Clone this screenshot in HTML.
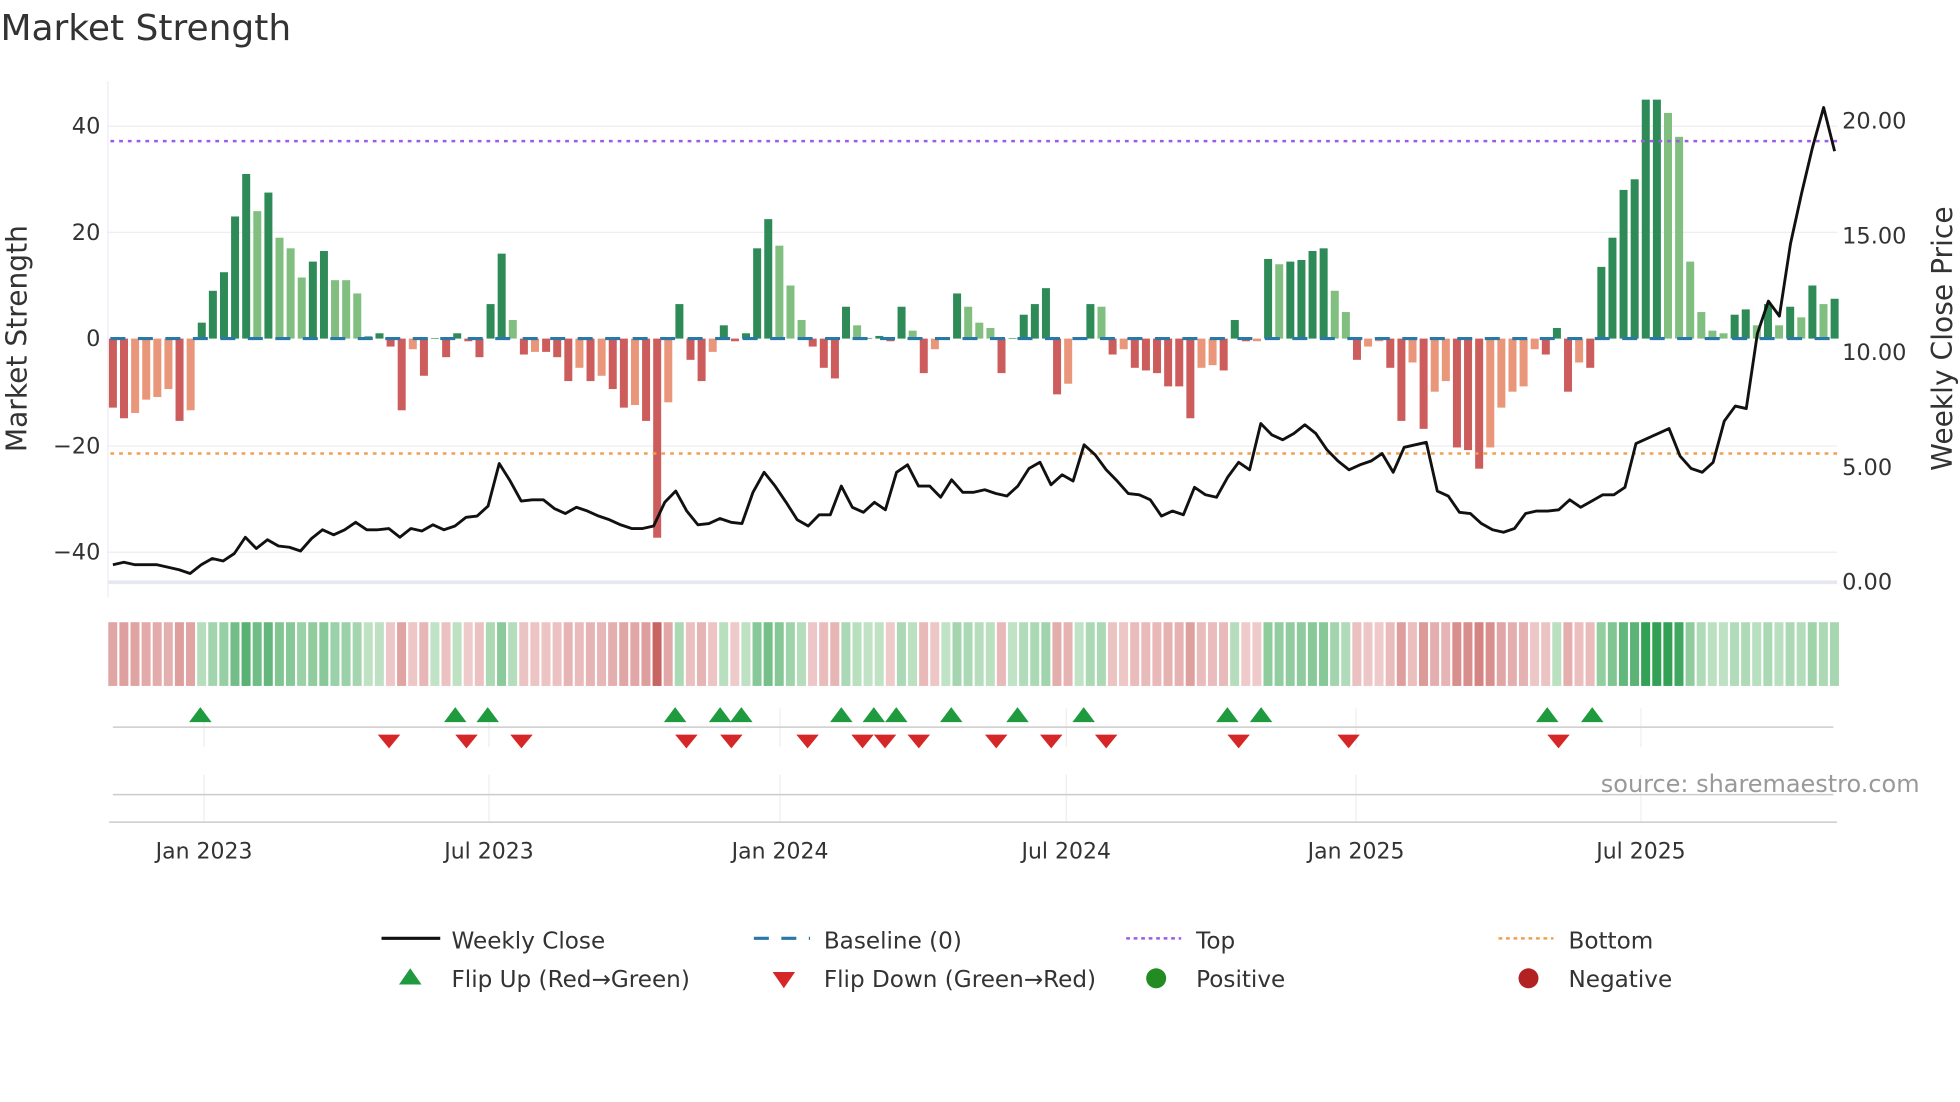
<!DOCTYPE html>
<html><head><meta charset="utf-8"><style>
html,body{margin:0;padding:0;background:#fff;width:1960px;height:1102px;overflow:hidden}
svg{display:block}
text{font-family:"DejaVu Sans","Liberation Sans",sans-serif}
</style></head><body>
<svg id="s" width="1960" height="1102" viewBox="0 0 1568 882" xmlns="http://www.w3.org/2000/svg">
<rect width="1568" height="882" fill="#fff"/>
<text x="0" y="32" font-size="28.8" fill="#333">Market Strength</text>
<g stroke="#eceef4" stroke-width="1">
<line x1="86" y1="101" x2="1470" y2="101"/><line x1="86" y1="186" x2="1470" y2="186"/>
<line x1="86" y1="357" x2="1470" y2="357"/><line x1="86" y1="442" x2="1470" y2="442"/>
</g>
<line x1="86" y1="466" x2="1470" y2="466" stroke="#e6e8f0" stroke-width="3"/>
<line x1="86" y1="65" x2="86" y2="478" stroke="#eceef4" stroke-width="1"/>
<g font-size="18" fill="#333" text-anchor="end">
<text x="80" y="107">40</text><text x="80" y="192">20</text><text x="80" y="277">0</text>
<text x="80" y="363">−20</text><text x="80" y="448">−40</text>
</g>
<g font-size="18" fill="#333">
<text x="1474" y="103">20.00</text><text x="1474" y="195">15.00</text><text x="1474" y="288">10.00</text>
<text x="1474" y="380">5.00</text><text x="1474" y="472">0.00</text>
</g>
<text transform="translate(21,271) rotate(-90)" text-anchor="middle" font-size="22.5" fill="#333">Market Strength</text>
<text transform="translate(1562,271) rotate(-90)" text-anchor="middle" font-size="22.5" fill="#333">Weekly Close Price</text>
<g id="bars"></g>
<line x1="88" y1="271" x2="1470" y2="271" stroke="#2a78a8" stroke-width="2.5" stroke-dasharray="12,10"/>
<line x1="88" y1="113" x2="1470" y2="113" stroke="#9b5de5" stroke-width="2" stroke-dasharray="3,4"/>
<line x1="88" y1="363" x2="1470" y2="363" stroke="#f0a050" stroke-width="2" stroke-dasharray="3,4"/>
<polyline id="pl" fill="none" stroke="#111" stroke-width="2.3" stroke-linejoin="round"/>
<g id="strip"></g>
<g stroke="#eee" stroke-width="1">
<line x1="163" y1="567" x2="163" y2="598"/><line x1="391" y1="567" x2="391" y2="598"/><line x1="624" y1="567" x2="624" y2="598"/><line x1="853" y1="567" x2="853" y2="598"/><line x1="1085" y1="567" x2="1085" y2="598"/><line x1="1313" y1="567" x2="1313" y2="598"/>
<line x1="163" y1="620" x2="163" y2="658"/><line x1="391" y1="620" x2="391" y2="658"/><line x1="624" y1="620" x2="624" y2="658"/><line x1="853" y1="620" x2="853" y2="658"/><line x1="1085" y1="620" x2="1085" y2="658"/><line x1="1313" y1="620" x2="1313" y2="658"/>
</g>
<line x1="90" y1="582" x2="1467" y2="582" stroke="#ccc" stroke-width="1.2"/>
<line x1="90" y1="636" x2="1467" y2="636" stroke="#ccc" stroke-width="1.2"/>
<line x1="87" y1="658" x2="1470" y2="658" stroke="#ccc" stroke-width="1.2"/>
<g id="mk"></g>
<text x="1536" y="634" text-anchor="end" font-size="19.2" fill="#999">source: sharemaestro.com</text>
<g font-size="17.6" fill="#333" text-anchor="middle">
<text x="163" y="687">Jan 2023</text><text x="391" y="687">Jul 2023</text><text x="624" y="687">Jan 2024</text>
<text x="853" y="687">Jul 2024</text><text x="1085" y="687">Jan 2025</text><text x="1313" y="687">Jul 2025</text>
</g>
<g font-size="18.5" fill="#333">
<line x1="305" y1="751" x2="352" y2="751" stroke="#111" stroke-width="2.5"/>
<text x="361" y="759">Weekly Close</text>
<line x1="603" y1="751" x2="648" y2="751" stroke="#2a78a8" stroke-width="2.5" stroke-dasharray="12,10"/>
<text x="659" y="759">Baseline (0)</text>
<line x1="901" y1="751" x2="945" y2="751" stroke="#9b5de5" stroke-width="2" stroke-dasharray="3,3"/>
<text x="957" y="759">Top</text>
<line x1="1199" y1="751" x2="1243" y2="751" stroke="#f0a050" stroke-width="2" stroke-dasharray="3,3"/>
<text x="1255" y="759">Bottom</text>
<polygon points="328,775 319,788 337,788" fill="#1f9a3f"/>
<text x="361" y="790">Flip Up (Red→Green)</text>
<polygon points="618,778 636,778 627,791" fill="#d62728"/>
<text x="659" y="790">Flip Down (Green→Red)</text>
<circle cx="925" cy="783" r="8" fill="#228b22"/>
<text x="957" y="790">Positive</text>
<circle cx="1223" cy="783" r="8" fill="#b22222"/>
<text x="1255" y="790">Negative</text>
</g>
</svg>
<script>
var NS="http://www.w3.org/2000/svg";
var B=[[-13,3],[-15,3],[-14,4],[-11.5,4],[-11,4],[-9.5,4],[-15.5,3],[-13.5,4],[3,1],[9,1],[12.5,1],[23,1],[31,1],[24,2],[27.5,1],[19,2],[17,2],[11.5,2],[14.5,1],[16.5,1],[11,2],[11,2],[8.5,2],[0.5,2],[1,1],[-1.5,3],[-13.5,3],[-2,4],[-7,3],[0,1],[-3.5,3],[1,1],[-0.5,3],[-3.5,3],[6.5,1],[16,1],[3.5,2],[-3,3],[-2.5,4],[-2.5,3],[-3.5,3],[-8,3],[-5.5,4],[-8,3],[-7,4],[-9.5,3],[-13,3],[-12.5,4],[-15.5,3],[-37.5,3],[-12,4],[6.5,1],[-4,3],[-8,3],[-2.5,4],[2.5,1],[-0.5,3],[1,1],[17,1],[22.5,1],[17.5,2],[10,2],[3.5,2],[-1.5,3],[-5.5,3],[-7.5,3],[6,1],[2.5,2],[0,1],[0.5,1],[-0.5,3],[6,1],[1.5,2],[-6.5,3],[-2,4],[0,1],[8.5,1],[6,2],[3,2],[2,2],[-6.5,3],[0,1],[4.5,1],[6.5,1],[9.5,1],[-10.5,3],[-8.5,4],[0,1],[6.5,1],[6,2],[-3,3],[-2,4],[-5.5,3],[-6,3],[-6.5,3],[-9,3],[-9,3],[-15,3],[-5.5,4],[-5,4],[-6,3],[3.5,1],[-0.5,3],[-0.5,4],[15,1],[14,2],[14.5,1],[14.8,1],[16.5,1],[17,1],[9,2],[5,2],[-4,3],[-1.5,4],[-0.5,4],[-5.5,3],[-15.5,3],[-4.5,4],[-17,3],[-10,4],[-8,4],[-20.5,3],[-21,3],[-24.5,3],[-20.5,4],[-13,4],[-10,4],[-9,4],[-2,4],[-3,3],[2,1],[-10,3],[-4.5,4],[-5.5,3],[13.5,1],[19,1],[28,1],[30,1],[45,1],[45,1],[42.5,2],[38,2],[14.5,2],[5,2],[1.5,2],[1,2],[4.5,1],[5.5,1],[2.5,2],[6.5,1],[2.5,2],[6,1],[4,2],[10,1],[6.5,2],[7.5,1]];
var col={1:"#2e8b57",2:"#80bf80",3:"#cd5c5c",4:"#e9967a"};
var N=B.length,x0=90,x1=1468,dx=(x1-x0)/(N-1);
var g=document.getElementById("bars"),st=document.getElementById("strip");
function lerp(a,b,t){return Math.round(a+(b-a)*t)}
for(var i=0;i<N;i++){var v=B[i][0],x=x0+i*dx;
 var h=Math.abs(v)*4.25; if(h<0.5)h=0.5;
 var r=document.createElementNS(NS,"rect");r.setAttribute("x",x-3.2);r.setAttribute("width",6.4);
 r.setAttribute("y",v>=0?271-h:271);r.setAttribute("height",h);r.setAttribute("fill",col[B[i][1]]);g.appendChild(r);
 var c,t;
 if(v>=0||B[i][1]<3){t=Math.min(1,0.12+Math.abs(v)/48);c="rgb("+lerp(212,50,t)+","+lerp(236,160,t)+","+lerp(212,85,t)+")";}
 else{t=Math.min(1,0.12+Math.abs(v)/40);c="rgb("+lerp(244,200,t)+","+lerp(218,100,t)+","+lerp(218,98,t)+")";}
 var s=document.createElementNS(NS,"rect");s.setAttribute("x",x-3.7);s.setAttribute("width",7.2);s.setAttribute("y",498);s.setAttribute("height",51);s.setAttribute("fill",c);st.appendChild(s);
}
var P=[452,450,452,452,452,454,456,459,452,447,449,443,430,439,432,437,438,441,431,424,428,424,418,424,424,423,430,423,425,420,424,421,414,413,405,371,385,401,400,400,407,411,406,409,413,416,420,423,423,421,402,393,409,420,419,415,418,419,394,378,389,402,416,421,412,412,389,406,410,402,408,378,372,389,389,398,384,394,394,392,395,397,389,375,370,388,380,385,356,364,376,385,395,396,400,413,409,412,390,396,398,382,370,376,339,348,352,347,340,347,360,369,376,372,369,363,378,358,356,354,393,397,410,411,419,424,426,423,411,409,409,408,400,406,401,396,396,390,355,351,347,343,365,375,378,370,337,325,327,267,241,253,195,155,118,86,121];
var M=P.length,pts=[];for(var j=0;j<M;j++){pts.push((x0+j*(x1-x0)/(M-1)).toFixed(1)+","+P[j]);}
document.getElementById("pl").setAttribute("points",pts.join(" "));
var mk=document.getElementById("mk");
[160,364,390,540,576,593,673,699,717,761,814,867,982,1009,1238,1274].forEach(function(x){var p=document.createElementNS(NS,"polygon");p.setAttribute("points",x+",566 "+(x-9)+",578 "+(x+9)+",578");p.setAttribute("fill","#1f9a3f");mk.appendChild(p);});
[311,373,417,549,585,646,690,708,735,797,841,885,991,1079,1247].forEach(function(x){var p=document.createElementNS(NS,"polygon");p.setAttribute("points",(x-9)+",588 "+(x+9)+",588 "+x+",599");p.setAttribute("fill","#d62728");mk.appendChild(p);});
</script>
</body></html>
